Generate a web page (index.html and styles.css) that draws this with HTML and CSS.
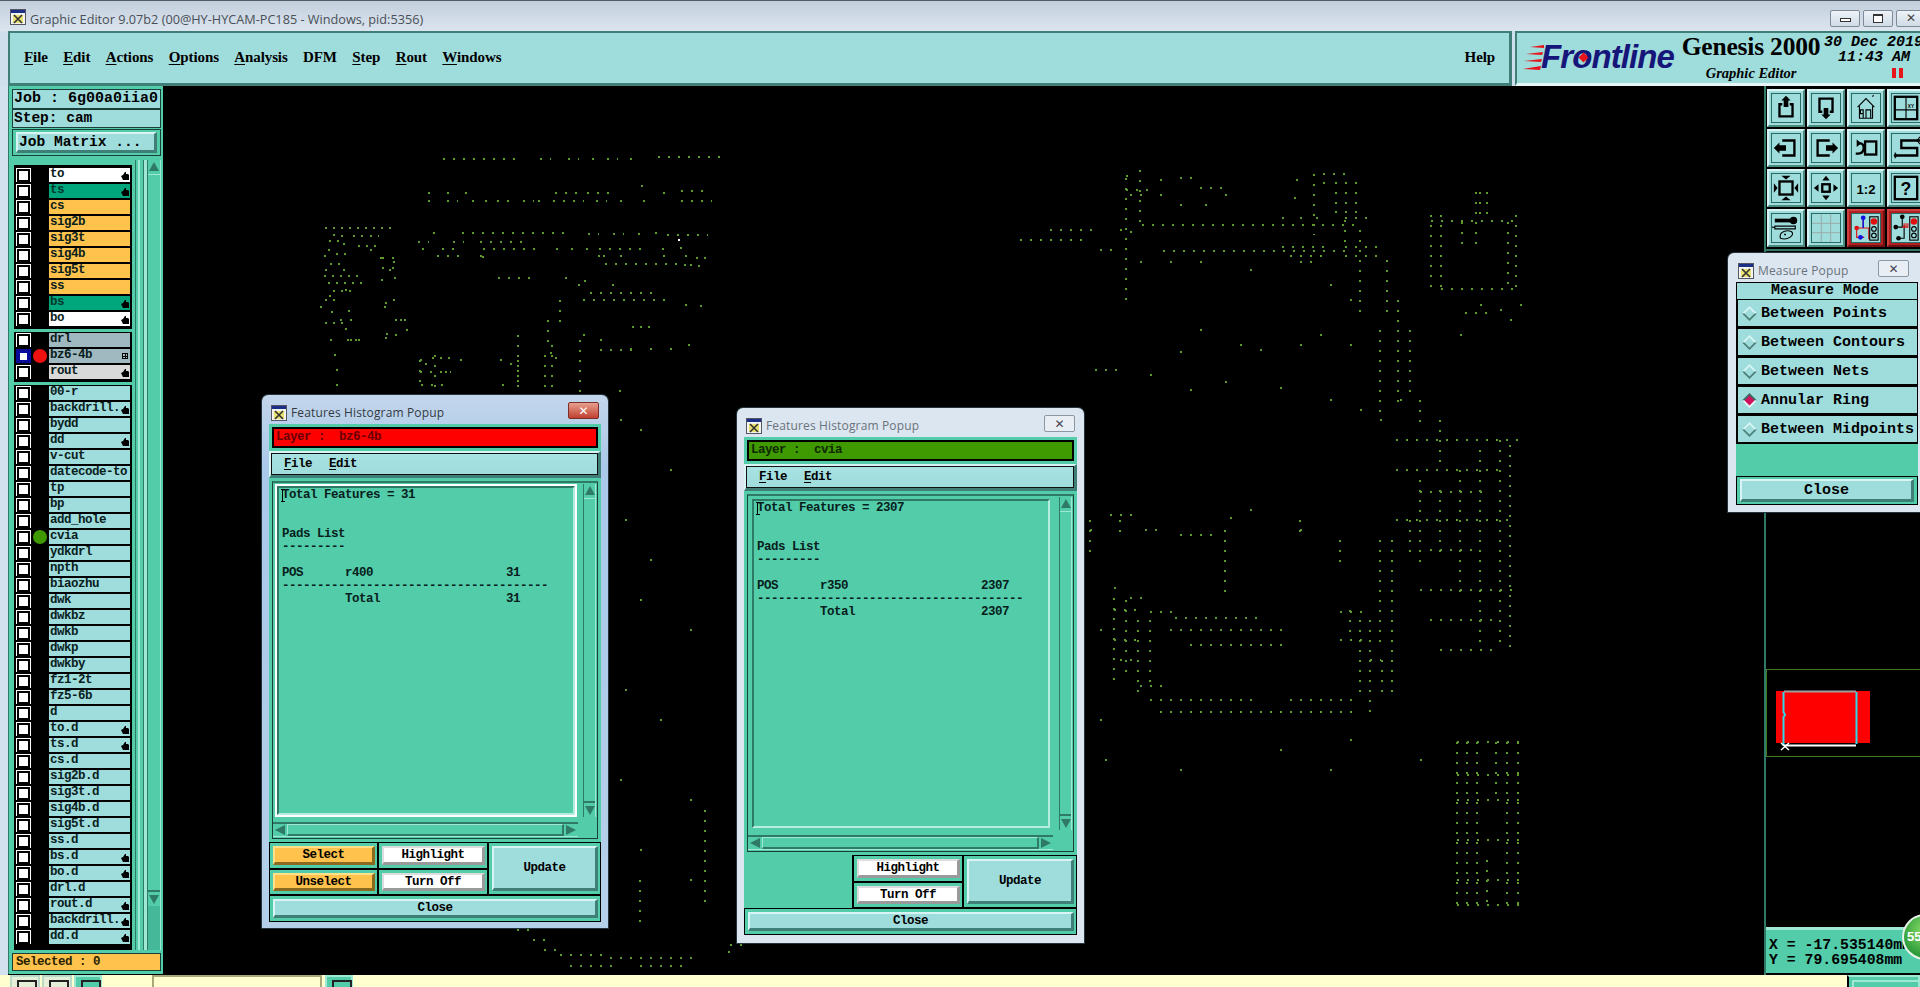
FILE: index.html
```html
<!DOCTYPE html>
<html lang="en">
<head>
<meta charset="utf-8">
<title>Graphic Editor</title>
<link rel="stylesheet" href="styles.css">
</head>
<body>
<svg class="defs" width="0" height="0" aria-hidden="true">
  <symbol id="x11" viewBox="0 0 16 16">
    <rect x=".5" y=".5" width="15" height="15" fill="#f4f4ee" stroke="#556"/>
    <rect x="1" y="1" width="14" height="3" fill="#1c2f86"/>
    <rect x="3" y="6" width="10" height="8" fill="#e8e070"/>
    <path d="M4 6l8 8M12 6l-8 8" stroke="#333" stroke-width="1.6"/>
  </symbol>
  <symbol id="hand" viewBox="0 0 8 8">
    <path d="M0 4l2-1 2-3 1 0v2l2 0 1 1v5H2z" fill="#000"/>
  </symbol>
  <symbol id="radio" viewBox="0 0 15 15">
    <path d="M7.5 0L15 7.500H12.500L7.500 2.500 2.500 7.500H0z" fill="#d8f4f4"/>
    <path d="M7.5 15L15 7.500H12.500L7.500 12.500 2.500 7.500H0z" fill="#4c8078"/>
  </symbol>
  <symbol id="radio-on" viewBox="0 0 15 15">
    <path d="M7.500 0L15 7.500H0z" fill="#3a6a62"/>
    <path d="M7.500 15L15 7.500H0z" fill="#e6f6f6"/>
    <path d="M7.500 2.500L12.500 7.500 7.500 12.500 2.500 7.500z" fill="#d0105c"/>
  </symbol>
</svg>

<div class="app">
  <header class="titlebar">
    <svg class="ticon"><use href="#x11"/></svg>
    <span class="ttext">Graphic Editor 9.07b2 (00@HY-HYCAM-PC185 - Windows, pid:5356)</span>
    <div class="wctl">
      <span class="wbtn"><i class="wmin"></i></span>
      <span class="wbtn"><i class="wmax"></i></span>
      <span class="wbtn wx">✕</span>
    </div>
  </header>

  <div class="topbar">
    <nav class="menubar">
      <span class="mi"><u>F</u>ile</span>
      <span class="mi"><u>E</u>dit</span>
      <span class="mi"><u>A</u>ctions</span>
      <span class="mi"><u>O</u>ptions</span>
      <span class="mi"><u>A</u>nalysis</span>
      <span class="mi">DFM</span>
      <span class="mi"><u>S</u>tep</span>
      <span class="mi"><u>R</u>out</span>
      <span class="mi"><u>W</u>indows</span>
      <span class="mi help">Help</span>
    </nav>
    <div class="brand">
      <svg class="streaks" width="21" height="28" viewBox="0 0 21 28">
        <path d="M21 1L7 3 21 4zM20 8L3 10 19 11zM19 15L1 17 18 18zM18 22L0 25 17 26z" fill="#e8141c"/>
      </svg>
      <span class="fl">Fr<span class="flo">o<i class="fld"></i></span>ntline</span>
      <div class="gen">
        <span class="gen1">Genesis 2000</span>
        <span class="gen2">Graphic Editor</span>
      </div>
      <div class="clock">
        <span class="date">30 Dec 2019</span>
        <span class="time">11:43 AM</span>
        <i class="pause"></i>
      </div>
    </div>
  </div>

  <main class="main">
    <aside class="left">
      <div class="lab lab-job">Job : 6g00a0iia0</div>
      <div class="lab lab-step">Step: cam</div>
      <div class="jm"><div class="jmb">Job Matrix ...</div></div>
      <div class="listwrap">
        <div class="lists">
          <div class="grp grp-first">
            <div class="row"><i class="cb"></i><i class="slot"></i><span class="lb c-w">to<svg class="hd"><use href="#hand"/></svg></span></div>
            <div class="row"><i class="cb"></i><i class="slot"></i><span class="lb c-g">ts<svg class="hd"><use href="#hand"/></svg></span></div>
            <div class="row"><i class="cb"></i><i class="slot"></i><span class="lb c-o">cs</span></div>
            <div class="row"><i class="cb"></i><i class="slot"></i><span class="lb c-o">sig2b</span></div>
            <div class="row"><i class="cb"></i><i class="slot"></i><span class="lb c-o">sig3t</span></div>
            <div class="row"><i class="cb"></i><i class="slot"></i><span class="lb c-o">sig4b</span></div>
            <div class="row"><i class="cb"></i><i class="slot"></i><span class="lb c-o">sig5t</span></div>
            <div class="row"><i class="cb"></i><i class="slot"></i><span class="lb c-o">ss</span></div>
            <div class="row"><i class="cb"></i><i class="slot"></i><span class="lb c-g">bs<svg class="hd"><use href="#hand"/></svg></span></div>
            <div class="row"><i class="cb"></i><i class="slot"></i><span class="lb c-w">bo<svg class="hd"><use href="#hand"/></svg></span></div>
          </div>
          <div class="grp">
            <div class="row"><i class="cb"></i><i class="slot"></i><span class="lb c-s">drl</span></div>
            <div class="row"><i class="cb cb-on"></i><i class="slot s-red"></i><span class="lb c-s">bz6-4b<i class="grid-ic"></i></span></div>
            <div class="row"><i class="cb"></i><i class="slot"></i><span class="lb c-l">rout<svg class="hd"><use href="#hand"/></svg></span></div>
          </div>
          <div class="grp grp-last">
            <div class="row"><i class="cb"></i><i class="slot"></i><span class="lb">00-r</span></div>
            <div class="row"><i class="cb"></i><i class="slot"></i><span class="lb">backdrill.<svg class="hd"><use href="#hand"/></svg></span></div>
            <div class="row"><i class="cb"></i><i class="slot"></i><span class="lb">bydd</span></div>
            <div class="row"><i class="cb"></i><i class="slot"></i><span class="lb">dd<svg class="hd"><use href="#hand"/></svg></span></div>
            <div class="row"><i class="cb"></i><i class="slot"></i><span class="lb">v-cut</span></div>
            <div class="row"><i class="cb"></i><i class="slot"></i><span class="lb">datecode-to</span></div>
            <div class="row"><i class="cb"></i><i class="slot"></i><span class="lb">tp</span></div>
            <div class="row"><i class="cb"></i><i class="slot"></i><span class="lb">bp</span></div>
            <div class="row"><i class="cb"></i><i class="slot"></i><span class="lb">add_hole</span></div>
            <div class="row"><i class="cb"></i><i class="slot s-green"></i><span class="lb">cvia</span></div>
            <div class="row"><i class="cb"></i><i class="slot"></i><span class="lb">ydkdrl</span></div>
            <div class="row"><i class="cb"></i><i class="slot"></i><span class="lb">npth</span></div>
            <div class="row"><i class="cb"></i><i class="slot"></i><span class="lb">biaozhu</span></div>
            <div class="row"><i class="cb"></i><i class="slot"></i><span class="lb">dwk</span></div>
            <div class="row"><i class="cb"></i><i class="slot"></i><span class="lb">dwkbz</span></div>
            <div class="row"><i class="cb"></i><i class="slot"></i><span class="lb">dwkb</span></div>
            <div class="row"><i class="cb"></i><i class="slot"></i><span class="lb">dwkp</span></div>
            <div class="row"><i class="cb"></i><i class="slot"></i><span class="lb">dwkby</span></div>
            <div class="row"><i class="cb"></i><i class="slot"></i><span class="lb">fz1-2t</span></div>
            <div class="row"><i class="cb"></i><i class="slot"></i><span class="lb">fz5-6b</span></div>
            <div class="row"><i class="cb"></i><i class="slot"></i><span class="lb">d</span></div>
            <div class="row"><i class="cb"></i><i class="slot"></i><span class="lb">to.d<svg class="hd"><use href="#hand"/></svg></span></div>
            <div class="row"><i class="cb"></i><i class="slot"></i><span class="lb">ts.d<svg class="hd"><use href="#hand"/></svg></span></div>
            <div class="row"><i class="cb"></i><i class="slot"></i><span class="lb">cs.d</span></div>
            <div class="row"><i class="cb"></i><i class="slot"></i><span class="lb">sig2b.d</span></div>
            <div class="row"><i class="cb"></i><i class="slot"></i><span class="lb">sig3t.d</span></div>
            <div class="row"><i class="cb"></i><i class="slot"></i><span class="lb">sig4b.d</span></div>
            <div class="row"><i class="cb"></i><i class="slot"></i><span class="lb">sig5t.d</span></div>
            <div class="row"><i class="cb"></i><i class="slot"></i><span class="lb">ss.d</span></div>
            <div class="row"><i class="cb"></i><i class="slot"></i><span class="lb">bs.d<svg class="hd"><use href="#hand"/></svg></span></div>
            <div class="row"><i class="cb"></i><i class="slot"></i><span class="lb">bo.d<svg class="hd"><use href="#hand"/></svg></span></div>
            <div class="row"><i class="cb"></i><i class="slot"></i><span class="lb">drl.d</span></div>
            <div class="row"><i class="cb"></i><i class="slot"></i><span class="lb">rout.d<svg class="hd"><use href="#hand"/></svg></span></div>
            <div class="row"><i class="cb"></i><i class="slot"></i><span class="lb">backdrill.<svg class="hd"><use href="#hand"/></svg></span></div>
            <div class="row"><i class="cb"></i><i class="slot"></i><span class="lb">dd.d<svg class="hd"><use href="#hand"/></svg></span></div>
          </div>
        </div>
        <div class="lscroll">
          <div class="strip"></div>
          <div class="vbar vbar-main">
            <i class="arr arr-up"></i>
            <i class="thumb"></i>
            <i class="arr arr-dn"></i>
          </div>
        </div>
      </div>
      <div class="sel">Selected : 0</div>
    </aside>

    <section class="canvas"></section>

    <aside class="rightcol">
      <div class="tools">
        <div class="tb"><svg viewBox="0 0 30 30"><path d="M11 11H8v13h14V11h-3" class="ln"/><path d="M15 2l5 5h-2.500v7h-5V7H10z"/></svg></div>
        <div class="tb"><svg viewBox="0 0 30 30"><path d="M11 19H8V5h14v14h-3" class="ln"/><path d="M15 27l5-5h-2.500v-7h-5v7H10z"/></svg></div>
        <div class="tb"><svg viewBox="0 0 30 30"><path d="M6 14L15 5l9 9M8 13v13h14V13M12 26V17h-3v4h3M15 26V17h5v9" class="ln ln1"/><path d="M22 3l1-2" class="ln ln1"/></svg></div>
        <div class="tb"><svg viewBox="0 0 30 30"><rect x="3" y="3" width="24" height="24" class="ln"/><path d="M15 3v24M3 17h24" class="ln ln1"/><text x="17" y="15" class="xy">XY</text></svg></div>

        <div class="tb"><svg viewBox="0 0 30 30"><path d="M11 7H24V23H11" class="ln"/><path d="M2 15l6-6v3h7v6H8v3z"/></svg></div>
        <div class="tb"><svg viewBox="0 0 30 30"><path d="M19 7H6V23H19" class="ln"/><path d="M28 15l-6-6v3h-7v6h7v3z"/></svg></div>
        <div class="tb"><svg viewBox="0 0 30 30"><rect x="14" y="8" width="12" height="14" class="ln"/><path d="M5 6l5 4-5 4z"/><path d="M7 10h2c5 0 5 11-2 11H4" class="ln"/></svg></div>
        <div class="tb"><svg viewBox="0 0 30 30"><path d="M30 7H10v8h17v8H2" class="ln"/><path d="M3 20l2 3-2 3M30 3l-3 4 3 4" class="ln ln1"/></svg></div>

        <div class="tb"><svg viewBox="0 0 30 30"><rect x="8" y="8" width="14" height="14" class="ln"/><path d="M15 6l-5-4h10zM15 24l-5 4h10zM6 15l-4-5v10zM24 15l4-5v10z"/></svg></div>
        <div class="tb"><svg viewBox="0 0 30 30"><rect x="11" y="11" width="8" height="8" class="ln"/><path d="M15 2l-4 5h8zM15 28l-4-5h8zM2 15l5-4v8zM28 15l-5-4v8z"/></svg></div>
        <div class="tb"><svg viewBox="0 0 30 30"><text x="15" y="21" class="ratio">1:2</text></svg></div>
        <div class="tb"><svg viewBox="0 0 30 30"><rect x="3" y="3" width="24" height="24" class="ln"/><text x="15" y="23" class="q">?</text></svg></div>

        <div class="tb"><svg viewBox="0 0 30 30"><path d="M3 5h17v4H3z"/><circle cx="23" cy="7" r="4"/><path d="M3 13h22v3H3z" class="ln ln1"/><path d="M3 14.500L0 14" class="ln ln1"/><path d="M9 26c-2-8 8-9 12-7 4 3-4 10-12 7z" class="ln ln1"/><circle cx="14" cy="22" r="1"/></svg></div>
        <div class="tb"><svg viewBox="0 0 30 30"><path d="M10 0v30M20 0v30M0 10h30M0 20h30" class="gridln"/></svg></div>
        <div class="tb tb-red"><svg viewBox="0 0 30 30"><path d="M5 15H12V4M5 15v10h8M12 15h6v12" class="net-r"/><path d="M12 4v11M12 25h-3" class="net-b"/><circle cx="5" cy="15" r="2.500" fill="#e01010"/><circle cx="12" cy="4" r="2.500" fill="#1010e0"/><circle cx="9" cy="25" r="2.500" fill="#1010e0"/><rect x="19" y="3" width="9" height="25" class="ln ln1"/><circle cx="23.500" cy="8" r="3.500" fill="#e01010"/><circle cx="23.500" cy="16" r="2.500" class="ln ln1"/><circle cx="23.500" cy="23" r="2.500" class="ln ln1"/></svg></div>
        <div class="tb tb-red"><svg viewBox="0 0 30 30"><path d="M5 14h6V3M5 14M7 26h6v-14" class="ln ln1"/><path d="M11 14h6v-4M13 10v4M15 10v4" class="net-r"/><circle cx="4" cy="14" r="2.500"/><circle cx="11" cy="3" r="2.500"/><circle cx="7" cy="26" r="2.500"/><rect x="19" y="3" width="9" height="25" class="ln ln1"/><circle cx="23.500" cy="8" r="3.500" fill="#e01010"/><circle cx="23.500" cy="16" r="2.500" class="ln ln1"/><circle cx="23.500" cy="23" r="2.500" class="ln ln1"/></svg></div>
      </div>

      <div class="minimap">
        <svg width="154" height="87" viewBox="0 0 154 87">
          <rect x="9" y="21" width="94" height="52" fill="#f00"/>
          <path d="M16.500 76V47l1.500-2-1.500-3V22" class="mm-c"/>
          <path d="M17 21.500H89" class="mm-g"/>
          <path d="M89.500 22V74" class="mm-c"/>
          <path d="M17 75.500H89" class="mm-w"/>
          <path d="M14 73l8 7M22 73l-8 7" class="mm-x"/>
        </svg>
      </div>

      <div class="coords">
        <div>X = -17.535140mm</div>
        <div>Y = 79.695408mm</div>
      </div>
    </aside>
  </main>

  <footer class="bottom">
    <i class="bb bb1"></i><i class="bb bb1"></i><i class="bb bb2"></i>
    <i class="gap1"></i>
    <i class="inp"></i>
    <i class="bb bb3"></i>
    <i class="spacer"></i>
    <i class="bb bb4"></i>
  </footer>

  <svg class="dots" width="1920" height="987" viewBox="0 0 1920 987" aria-hidden="true">
    <path class="p10" d="M443 159H521M540 159h11M568 159h11M592 159h2M607 159h11M630 159h2M658 157H722M641 186h10
      M428 193h2M447 193h2M465 193h9M555 193h22M587 193h22M663 193h2M681 191h22
      M428 201h2M447 201h11M472 201h2M485 201h2M497 201h2M507 201h2M523 201h11M538 201h2M553 201h31M596 201h11M620 201h2M643 201h2M681 201h31
      M433 233h2M462 233H568M588 234h11M613 234h11M638 234h10M655 233h8M667 235H708
      M418 242h11M453 242h11M480 242H530M422 249h2M442 249h18M483 249H540M556 249h2M571 249h2M586 249h2M599 249h45M662 249h2M680 248h2
      M437 256H465M480 256h2M598 256h2M603 256h2M620 256h2M663 256h2M685 256h2M696 258h2M704 258h2
      M605 264H680M684 265h2M690 265h2M698 266h2
      M498 278h32M565 278h2M578 285h2M584 281h2
      M590 293H655M583 300H665M612 285h2M685 305h2M700 306h2
      M632 327h2M640 327h2M648 327h2M583 335h2M600 340h2M630 349h2M600 350h32M650 349h10M688 345h2M670 349h2
      M420 360h2M440 358h2M448 358h10M460 360h8M500 360h2M550 353h2M510 364h2M555 358h2
      M420 372h31M421 385h30M425 364h2M502 385h2M432 358h2M445 372h2
      M1126 190h22M1126 176h2M1160 180h2M1180 178h12M1200 188h22M1323 174h30M1323 183h2M1335 183h22M1335 193h22M1335 203h22M1335 212h22M1296 180h2M1294 198h2
      M1130 195h18M1160 195h2M1180 205h2M1205 205h2M1225 195h2
      M1282 218h2M1300 218h2M1316 218h10M1345 218h22M1431 221H1520
      M1142 225H1360M1130 232h10M1050 230h50M1020 240H1090M1120 230h2
      M1163 251H1345M1282 247H1330M1345 247h32M1290 256H1330M1345 256H1378M1100 250h12
      M1140 262h2M1170 262h2M1200 262h10M1250 270h2M1300 262h12M1330 285h2M1350 300h2
      M1441 289H1520M1465 313h25M1510 320h2M1460 335h3M1480 305h2M1500 310h2M1520 305h2
      M1180 352h2M1200 330h2M1240 345h2M1260 350h2M1300 345h2M1320 335h2M1350 345h2
      M1095 370h30M1150 375h2M1190 390h2M1225 382h10M1280 388h2M1330 400h2M1360 410h2M1380 420h2M1400 400h2
      M1110 515h22M1145 530h12M1090 530h2M1180 535h32M1230 518h2M1250 510h2M1300 530h2
      M1114 588h2M1130 598h12M1114 610h22M1175 618H1260M1170 630H1290M1190 645H1285
      M1150 612h30M1150 700H1260M1160 712H1360M1290 700h70
      M1114 640h22M1120 660h20M1140 686h22M1340 612h30M1340 640h30M1370 660h11
      M1396 440H1520M1396 470H1500M1420 492H1490M1396 520H1510M1430 550h50M1420 590H1520M1430 620H1500M1440 650h60
      M1457 742h62M1457 775h62M1457 800h62M1457 840h62M1457 880h62M1457 905h62
      M620 420h2M640 430h2M670 470h2M625 520h2M650 560h2M640 600h2M690 630h2
      M625 690h2M660 720h2M690 800h2M620 780h2M640 850h2M690 880h2
      M517 930h12M533 940h12M544 950h12M560 955h50M570 966h46M610 958H700M640 966H690M730 945h12M728 952h2
      M1100 630h2M1100 720h2M1105 760h2M1180 770h2M1280 750h2M1330 770h2M1350 740h2M1420 760h2"/>
    <path class="p8" d="M325 228H395M333 235h2M341 236h2M353 236h10M370 236h9M329 241h10M343 244h2M358 246h20M328 250h2M324 256h2M336 254h10M370 250h2M382 258h2M392 258h2
      M330 264h10M325 270h2M343 270h2M324 276h40M328 283h40M333 291h24M329 296h2M345 290h2
      M382 268h2M381 280h2M393 262h2M389 270h2M392 268h2M380 258h2M394 278h2
      M325 300h10M331 312h2M348 311h2M325 323h24M393 300h2M385 303h2M384 307h2M330 340h2M340 320h2
      M320 307h2M350 320h2M400 320h2M395 320h2M386 334h2M347 340h10M404 320h2M406 330h2
      M334 355h2M336 370h2M336 385h2M345 329h2M350 340h10M385 338h2M395 335h2"/>
    <path class="p10v" d="M1126 178V300M1140 170V225M1314 174V235M1431 215V295M1441 215V295M1516 215V295M1476 192V245M1487 192V220
      M1462 222V250M1508 222V290M1387 260V320M1345 220V250M1360 230V320M1380 330V420M1398 300V410M1410 330V400M1480 192V215M1420 400V430M1440 420V470
      M1500 440V650M1510 445V655M1480 450V650M1460 470V600M1440 490V560M1420 480V570M1410 520V560M1392 540V700M1380 540V650M1370 620V720
      M1114 598V680M1126 600V680M1138 620V700M1150 620V690M1350 610V640M1360 620V700M1382 660V700
      M1457 742V905M1467 742V905M1477 742V905M1507 742V905M1518 742V905M1487 860V905M1496 742V800
      M705 810V910M620 390V395M545 355V392M552 345V392M580 340V392M518 335V392M518 360V385M640 880V930
      M1090 520V560M1120 520V540M1225 530V600M1300 520V540M1340 540V570M560 300V330M548 320V350M483 256V262M420 360V390M435 355V390"/>
    <path class="wd" d="M678 240h2"/>
  </svg>

  <section class="win w1 focus">
    <div class="wtitle">
      <svg class="ticon"><use href="#x11"/></svg>
      <span class="wname">Features Histogram Popup</span>
      <span class="wclose wclose-on">✕</span>
    </div>
    <div class="layer"><div class="layer-in li-red">Layer :  bz6-4b</div></div>
    <div class="wmenu"><span><u>F</u>ile</span><span><u>E</u>dit</span></div>
    <div class="wbody">
      <div class="tbox">
        <div class="tcol">
          <div class="tarea"><i class="ibeam"></i><pre>Total Features = 31


Pads List
---------

POS      r400                   31
--------------------------------------
         Total                  31</pre></div>
          <div class="hbar"><i class="ha ha-l"></i><i class="hthumb"></i><i class="ha ha-r"></i></div>
        </div>
        <div class="vcol"><div class="vbar"><i class="arr arr-up"></i><i class="thumb thumb-w"></i><i class="arr arr-dn"></i></div></div>
      </div>
    </div>
    <div class="btns">
      <div class="cell"><div class="btn b-o">Select</div></div>
      <div class="cell"><div class="btn b-w">Highlight</div></div>
      <div class="cell cell-up"><div class="btn">Update</div></div>
      <div class="cell"><div class="btn b-o">Unselect</div></div>
      <div class="cell"><div class="btn b-w">Turn Off</div></div>
      <div class="cell cell-close"><div class="btn">Close</div></div>
    </div>
  </section>

  <section class="win w2">
    <div class="wtitle">
      <svg class="ticon"><use href="#x11"/></svg>
      <span class="wname">Features Histogram Popup</span>
      <span class="wclose">✕</span>
    </div>
    <div class="layer"><div class="layer-in li-green">Layer :  cvia</div></div>
    <div class="wmenu"><span><u>F</u>ile</span><span><u>E</u>dit</span></div>
    <div class="wbody">
      <div class="tbox">
        <div class="tcol">
          <div class="tarea"><i class="ibeam"></i><pre>Total Features = 2307


Pads List
---------

POS      r350                   2307
--------------------------------------
         Total                  2307</pre></div>
          <div class="hbar"><i class="ha ha-l"></i><i class="hthumb"></i><i class="ha ha-r"></i></div>
        </div>
        <div class="vcol"><div class="vbar"><i class="arr arr-up"></i><i class="thumb thumb-w"></i><i class="arr arr-dn"></i></div></div>
      </div>
    </div>
    <div class="btns">
      <div class="blank"></div>
      <div class="cell"><div class="btn b-w">Highlight</div></div>
      <div class="cell cell-up"><div class="btn">Update</div></div>
      <div class="cell"><div class="btn b-w">Turn Off</div></div>
      <div class="cell cell-close"><div class="btn">Close</div></div>
    </div>
  </section>

  <section class="win w3">
    <div class="wtitle">
      <svg class="ticon"><use href="#x11"/></svg>
      <span class="wname">Measure Popup</span>
      <span class="wclose wclose-m">✕</span>
    </div>
    <div class="mm-head">Measure Mode</div>
    <div class="mrow"><svg class="rd"><use href="#radio"/></svg>Between Points</div>
    <div class="mrow"><svg class="rd"><use href="#radio"/></svg>Between Contours</div>
    <div class="mrow"><svg class="rd"><use href="#radio"/></svg>Between Nets</div>
    <div class="mrow"><svg class="rd"><use href="#radio-on"/></svg>Annular Ring</div>
    <div class="mrow"><svg class="rd"><use href="#radio"/></svg>Between Midpoints</div>
    <div class="mspace"></div>
    <div class="mclose"><div class="btn">Close</div></div>
  </section>

  <div class="badge">55</div>
</div>
</body>
</html>
```

FILE: styles.css
```css
* { box-sizing: border-box; }
html, body { margin: 0; padding: 0; width: 1920px; height: 987px; overflow: hidden; background: #000; }
.defs { position: absolute; }
i { display: block; font-style: normal; }

.app {
  position: relative; width: 1920px; height: 987px; overflow: hidden;
  display: flex; flex-direction: column;
  background: #d3e1ee;
  font-family: "Liberation Mono", monospace; font-weight: 700; font-size: 12.5px; letter-spacing: -.5px; color: #000;
}

/* Title bar */
.titlebar {
  height: 31px; flex: none; display: flex; align-items: center; padding: 2px 0 0 10px;
  background: linear-gradient(#c3cfdc, #dbe5f0);
  border-top: 1px solid #555c66;
}
.ticon { width: 16px; height: 16px; flex: none; }
.ttext {
  margin-left: 4px; padding-top: 4px; font: 400 12.7px "Open Sans", sans-serif; letter-spacing: 0; color: #4a4f55; white-space: nowrap;
}
.wctl { margin-left: auto; display: flex; gap: 3px; margin-right: -6px; padding-top: 2px; }
.wbtn {
  width: 30px; height: 17px; border: 1px solid #7d8b99; border-radius: 2px;
  background: linear-gradient(#eef3f8, #cfdbe6);
  display: flex; align-items: center; justify-content: center;
  font: 700 12px "DejaVu Sans", sans-serif; letter-spacing: 0; color: #444;
}
.wmin { width: 11px; height: 4px; border: 1px solid #333; background: #fff; margin-top: 3px; }
.wmax { width: 10px; height: 9px; border: 1px solid #333; border-top-width: 2px; background: #fff; }

/* Top bars */
.topbar { height: 55px; flex: none; display: flex; padding-left: 8px; gap: 3px; background: #cfe0ec; }
.menubar, .brand {
  background: #9fdcdc;
  border-top: 2px solid #3f7f78; border-left: 2px solid #3f7f78;
  border-bottom: 3px solid #e6f6f6;
}
.menubar {
  width: 1504px; display: flex; align-items: center; gap: 15.4px; padding: 0 0 1px 14px;
  border-right: 3px solid #3f7f78; border-bottom-color: #3f7f78;
  font: 700 15px "Liberation Serif", serif; letter-spacing: -.1px;
}
.mi u { text-underline-offset: 2px; }
.help { margin-left: auto; margin-right: 14px; }
.brand { flex: 1; min-width: 0; display: flex; align-items: flex-start; overflow: hidden; padding-left: 6px; position: relative; letter-spacing: 0; }
.streaks { margin-top: 11px; flex: none; }
.fl {
  font: italic 700 33px "Liberation Sans", sans-serif; color: #15157a; letter-spacing: -.9px;
  margin-top: 5px; line-height: 38px; flex: none; margin-left: -3px; width: 140px; white-space: nowrap;
}
.flo { position: relative; display: inline-block; }
.fld {
  position: absolute; left: 8px; top: 16px; width: 7px; height: 7px; background: #e8141c; transform: rotate(45deg);
}
.gen { width: 140px; display: flex; flex-direction: column; align-items: center; flex: none; font-family: "Liberation Serif", serif; }
.gen1 { font-size: 25.5px; font-weight: 700; line-height: 28px; white-space: nowrap; letter-spacing: -.2px; }
.gen2 { font-size: 14.5px; font-style: italic; line-height: 16px; margin-top: 4px; white-space: nowrap; }
.clock {
  flex: none; margin-left: 3px; display: flex; flex-direction: column; align-items: flex-start;
  font: italic 700 15px "Liberation Mono", monospace; line-height: 15px; white-space: nowrap; padding-top: 2px;
}
.time { margin-left: 14px; }
.pause {
  width: 11px; height: 10px; margin: 3px 0 0 68px;
  border-left: 4px solid #e8141c; border-right: 4px solid #e8141c;
}

/* Main */
.main { flex: 1; min-height: 0; display: flex; padding-left: 8px; background: #000; position: relative; border-left: 0; }
.main::before { content: ""; position: absolute; left: 0; top: 0; bottom: 0; width: 8px; background: #d3e1ee; }
.left {
  width: 155px; flex: none; display: flex; flex-direction: column; padding: 3px 2px 3px 3px;
  background: #52cca9; border-left: 1px solid #2f7a66; margin-bottom: 1px;
}
.lab {
  background: #9fdcdc; border: 1px solid #1b3f38; font-size: 15px; letter-spacing: 0; line-height: 17px; white-space: nowrap; padding-left: 1px;
}
.lab-job { height: 20px; }
.lab-step { height: 19px; margin-top: 0; font-size: 14.5px; }
.jm { height: 27px; margin-top: 1px; border: 1px solid #1b3f38; padding: 2px 3px; background: #52cca9; }
.jmb {
  height: 100%; background: #9fdcdc; border-top: 2px solid #d8f4f4; border-left: 2px solid #d8f4f4;
  border-right: 3px solid #3f7f78; border-bottom: 3px solid #3f7f78; font-size: 14.6px; letter-spacing: 0; line-height: 17px; padding-left: 1px; white-space: nowrap;
}
.listwrap { flex: 1; min-height: 0; display: flex; margin-top: 4px; }
.lists { width: 118px; flex: none; display: flex; flex-direction: column; gap: 3px; margin: 5px 0 0 2px; }
.grp { background: #000; padding: 1px 2px; }
.grp-first { padding-top: 3px; }
.grp-last { flex: 1; }
.row { height: 16px; display: flex; padding-bottom: 2px; }
.cb { width: 15px; height: 14px; background: #fff; display: flex; align-items: center; justify-content: center; flex: none; }
.cb::after { content: ""; width: 9px; height: 9px; border: 2px solid #000; background: #fff; }
.cb-on { background: #0a0a9a; }
.cb-on::after { border: 0; width: 7px; height: 7px; }
.slot { width: 18px; flex: none; position: relative; }
.s-red::after, .s-green::after {
  content: ""; position: absolute; left: 2px; top: 0; width: 14px; height: 14px; border-radius: 50%;
}
.s-red::after { background: #f01010; }
.s-green::after { background: #3f9900; }
.lb {
  width: 81px; flex: none; height: 14px; background: #9fdcdc; padding-left: 1px; line-height: 13px; position: relative; white-space: nowrap; overflow: hidden; color: #08201c;
}
.c-w { background: #fff; }
.c-g { background: #00a67c; color: #04382c; }
.c-o { background: #ffc34d; }
.c-s { background: #a0b8c0; }
.c-l { background: #d9d9d9; }
.hd { position: absolute; right: 1px; top: 4px; width: 8px; height: 8px; }
.grid-ic {
  position: absolute; right: 2px; top: 4px; width: 6px; height: 6px;
  border: 1px solid #000; background: linear-gradient(#000, #000) center/1px 100% no-repeat, linear-gradient(#000, #000) center/100% 1px no-repeat;
}
.lscroll { flex: 1; display: flex; margin-left: 3px; }
.strip {
  width: 12px; flex: none;
  background: linear-gradient(90deg, #2f7a66 0 1px, #52cca9 1px 3px, #9fe8d4 3px 5px, #52cca9 5px 8px, #2f7a66 8px 9px, #9fe8d4 9px 12px);
}
.vbar { display: flex; flex-direction: column; background: #45b899; height: 100%; border-left: 1px solid #2f7a66; border-right: 1px solid #9fe8d4; }
.vbar-main { flex: 1; }
.arr { height: 14px; flex: none; background: #52cca9 center/100% 100% no-repeat; position: relative; }
.arr-up::after, .arr-dn::after {
  content: ""; position: absolute; left: 50%; margin-left: -5px; border-left: 5px solid transparent; border-right: 5px solid transparent;
}
.arr-up::after { top: 2px; border-bottom: 9px solid #2f7a66; }
.arr-dn::after { bottom: 2px; border-top: 9px solid #2f7a66; }
.thumb {
  height: 718px; flex: none; background: #52cca9; border-top: 1px solid #9fe8d4; border-bottom: 2px solid #2f7a66;
}
.thumb-w { height: auto; flex: 1; }
.sel {
  height: 18px; flex: none; margin-top: 3px; background: #ffc34d; border: 1px solid #1b3f38; color: #2a2200; padding-left: 3px; line-height: 16px; white-space: nowrap;
}

.canvas { flex: 1; background: #000; }

/* Right column */
.rightcol {
  width: 156px; flex: none; border-left: 2px solid #2f7a66; display: flex; flex-direction: column; overflow: hidden; background: #000; position: relative; letter-spacing: 0;
}
.tools {
  flex: none; display: grid; grid-template-columns: repeat(4, 38px); gap: 2px; padding: 3px 0 2px 1px; background: #000; border-bottom: 2px solid #2f7a66; width: 200px;
}
.tb {
  width: 38px; height: 38px; padding: 2px; background: #9fdcdc;
  border-top: 2px solid #d8f4f4; border-left: 2px solid #d8f4f4; border-right: 2px solid #4c8c80; border-bottom: 2px solid #4c8c80;
}
.tb svg { display: block; width: 100%; height: 100%; border: 1px solid #2a6a66; background: #9fdcdc; }
.tb path, .tb circle { fill-rule: evenodd; }
.tb-red { background: #b02020; border-color: #d04040 #701010 #701010 #d04040; }
.ln { fill: none; stroke: #000; stroke-width: 2.500; }
.ln1 { stroke-width: 1.200; }
.xy { font: 700 5px "Liberation Sans", sans-serif; fill: #000; }
.ratio { font: 700 14px "Liberation Sans", sans-serif; text-anchor: middle; fill: #000; }
.q { font: 700 19px "Liberation Sans", sans-serif; text-anchor: middle; fill: #000; }
.gridln { fill: none; stroke: #9aa8a8; stroke-width: 1; }
.net-r { fill: none; stroke: #e01010; stroke-width: 1.200; }
.net-b { fill: none; stroke: #1010e0; stroke-width: 1.600; }
.minimap { flex: none; height: 88px; margin-top: 418px; border-top: 1px solid #3f7a20; border-bottom: 1px solid #3f7a20; border-left: 1px solid #3f7a20; }
.minimap svg { display: block; }
.mm-c { fill: none; stroke: #30d8e8; stroke-width: 2; }
.mm-g { fill: none; stroke: #a0a0a0; stroke-width: 2; }
.mm-w { fill: none; stroke: #fff; stroke-width: 2; }
.mm-x { fill: none; stroke: #fff; stroke-width: 1.500; }
.coords {
  margin-top: auto; height: 46px; flex: none; background: #52cca9; border-top: 3px solid #9fe8d4; padding: 8px 0 0 3px;
  font-size: 14.8px; line-height: 15px; white-space: nowrap; margin-bottom: 2px;
}

/* Bottom */
.bottom { height: 12px; flex: none; display: flex; background: #ffffd0; padding-left: 10px; gap: 2px; overflow: hidden; }
.bb { width: 30px; height: 14px; flex: none; background: #e6efd8; border: 2px solid #b9d9c9; border-bottom: 0; position: relative; }
.bb::after { content: ""; position: absolute; left: 5px; top: 3px; width: 16px; height: 12px; border: 2px solid #222; }
.bb2 { width: 28px; background: #52cca9; border-color: #9fe8d4; }
.bb3 { width: 28px; margin-left: 1px; background: #52cca9; border-color: #9fe8d4; }
.bb4 { width: 73px; background: #52cca9; border-color: #9fe8d4; border-left: 2px solid #000; }
.bb4::after { border-color: #9fe8d4; left: 3px; width: 70px; }
.gap1 { width: 46px; flex: none; }
.inp { width: 170px; flex: none; border: 2px solid #a8a878; border-bottom: 0; background: #ffffd0; }
.spacer { flex: 1; }

/* Canvas dots */
.dots { position: absolute; left: 0; top: 0; pointer-events: none; clip-path: polygon(163px 86px, 1764px 86px, 1764px 975px, 163px 975px); }
.dots path { fill: none; stroke: #5c9a2e; stroke-width: 2; }
.p10, .p10v { stroke-dasharray: 2 8; }
.p8 { stroke-dasharray: 2 6; }
.dots .wd { stroke: #fff; }

/* Popups */
.win {
  position: absolute; display: flex; flex-direction: column; padding: 0 7px 6px;
  border-radius: 6px 6px 0 0; background: #dce6f0;
  box-shadow: 0 0 0 1px #24343c;
}
.w1 { left: 262px; top: 395px; width: 346px; height: 533px; background: linear-gradient(#c3d6eb, #a9c8ea 14%, #b4cfe9 90%); }
.w2 { left: 737px; top: 408px; width: 347px; height: 535px; }
.w3 { left: 1728px; top: 253px; width: 200px; height: 259px; padding: 0 10px 7px 8px; }
.wtitle { height: 29px; flex: none; display: flex; align-items: center; gap: 4px; padding-left: 2px; }
.wname { font: 400 12px "Open Sans", sans-serif; letter-spacing: .15px; padding-top: 6px; color: #333a42; white-space: nowrap; }
.wtitle .ticon { margin-top: 6px; }
.w2 .wname, .w3 .wname { color: #6a737c; }
.wclose {
  margin-left: auto; width: 31px; height: 17px; margin-right: 2px; border: 1px solid #8b97a3; border-radius: 2px; background: #e8eef4; color: #445;
  font: 700 12px "DejaVu Sans", sans-serif; letter-spacing: 0; display: flex; align-items: center; justify-content: center; margin-top: 2px;
}
.wclose-on { background: linear-gradient(#e8a090, #c04030); border-color: #7a3028; color: #fff; }
.wclose-m { margin-right: 9px; }
.layer { height: 27px; flex: none; background: #52cca9; padding: 3px; }
.layer-in { height: 21px; border: 2px solid #000; line-height: 16px; padding-left: 2px; white-space: pre; }
.li-red { background: #f00; color: #6a0000; }
.li-green { background: #3f9900; color: #0e2a00; }
.wmenu {
  height: 27px; flex: none; display: flex; gap: 17px; padding: 1px 0 2px 13px; align-items: center;
  background: linear-gradient(#a8e2e2, #9fdcdc); border: 1px solid #000; border-top: 2px solid #d8f4f4; border-left: 2px solid #d8f4f4; border-bottom: 3px solid #3f7f78; border-right: 3px solid #3f7f78;
  box-shadow: 0 0 0 1px #111 inset;
}
.wmenu u { text-underline-offset: 2px; }
.wbody { flex: none; height: 364px; background: #52cca9; padding: 3px 3px 3px 3px; }
.tbox { height: 100%; display: flex; border: 1px solid #1b3f38; border-top: 2px solid #2f7a66; }
.tcol { flex: 1; display: flex; flex-direction: column; min-width: 0; }
.tarea {
  position: relative; flex: 1; margin: 1px 0 0 2px; width: 302px; border: 2px solid #52cca9; min-height: 0;
  background: #52cca9;
}
.focus .tarea { border-color: #fff; }
.tarea pre {
  margin: 0; height: 100%; font: inherit; line-height: 13px; padding: 1px 0 0 3px; color: #08201c;
  border-top: 2px solid #2f7a66; border-left: 2px solid #2f7a66; border-right: 2px solid #b5ece0; border-bottom: 2px solid #b5ece0;
}
.ibeam { position: absolute; left: 4px; top: 3px; width: 4px; height: 13px; border-top: 1px solid #000; border-bottom: 1px solid #000; }
.ibeam::after { content: ""; position: absolute; left: 1px; top: 0; bottom: 0; width: 1px; background: #000; }
.hbar {
  height: 15px; flex: none; margin: 5px 0 1px 0; width: 305px; display: flex; background: #45b899; border-top: 2px solid #2f7a66; border-bottom: 1px solid #9fe8d4;
}
.ha { width: 14px; flex: none; position: relative; background: #52cca9; }
.ha::after { content: ""; position: absolute; top: 1px; border-top: 5px solid transparent; border-bottom: 5px solid transparent; }
.ha-l::after { left: 2px; border-right: 10px solid #2f7a66; }
.ha-r::after { right: 2px; border-left: 10px solid #2f7a66; }
.hthumb { flex: 1; background: #52cca9; border-left: 1px solid #9fe8d4; border-top: 1px solid #9fe8d4; border-bottom: 2px solid #2f7a66; border-right: 2px solid #2f7a66; }
.vcol { width: 15px; flex: none; padding: 1px 1px 21px 1px; }
.btns {
  flex: none; height: 80px; display: grid; grid-template-columns: 109px 110px 1fr; grid-template-rows: 27px 26px 27px; background: #52cca9;
}
.blank { grid-row: span 2; background: #52cca9; border-right: 1px solid #000; }
.cell { background: #52cca9; border: 1px solid #000; padding: 3px 2px 3px 3px; min-height: 0; }
.cell-up { grid-row: span 2; }
.cell-close { grid-column: 1 / -1; }
.btn {
  height: 100%; display: flex; align-items: center; justify-content: center; background: #9fdcdc;
  border-top: 2px solid #d8f4f4; border-left: 2px solid #d8f4f4; border-right: 3px solid #3f7f78; border-bottom: 3px solid #3f7f78; white-space: nowrap;
}
.b-o { background: #ffc34d; border-color: #ffe08a #8a6a20 #8a6a20 #ffe08a; }
.b-w { background: #fff; border-color: #ddd #9a9a9a #9a9a9a #ddd; }

/* Measure popup */
.mm-head { height: 17px; flex: none; background: #9fdcdc; border: 1px solid #000; border-bottom: 0; text-align: center; font-size: 15px; letter-spacing: 0; line-height: 16px; padding-right: 4px; }
.mrow {
  height: 29px; flex: none; display: flex; align-items: center; background: #9fdcdc; border: 2px solid #000; border-width: 1px 1px 2px 2px; font-size: 15px; letter-spacing: 0; padding-left: 4px; gap: 4px; white-space: nowrap;
}
.rd { width: 15px; height: 15px; flex: none; }
.mspace { height: 32px; flex: none; background: #52cca9; }
.mclose { flex: none; height: 29px; background: #52cca9; border: 1px solid #000; padding: 2px 3px; font-size: 15px; letter-spacing: 0; }

/* Badge */
.badge {
  position: absolute; left: 1902px; top: 914px; width: 46px; height: 46px; border-radius: 50%;
  background: radial-gradient(circle at 50% 35%, #8be06a, #2f9c3a 70%); border: 2px solid #e8f4ea;
  color: #fff; font: 700 13px "Liberation Sans", sans-serif; letter-spacing: 0; line-height: 42px; padding-left: 3px;
}
```
